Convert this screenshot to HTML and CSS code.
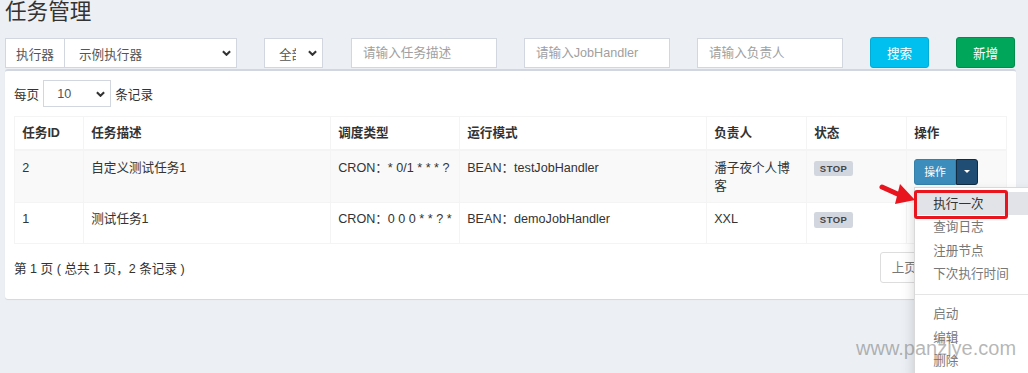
FILE: index.html
```html
<!DOCTYPE html>
<html lang="zh-CN">
<head>
<meta charset="utf-8">
<title>任务管理</title>
<link rel="stylesheet" href="styles.css">
</head>
<body>
<div class="page">
  <h1 class="title">任务管理</h1>

  <div class="filters">
    <div class="input-group">
      <span class="addon">执行器</span>
      <div class="select sel-main"><span>示例执行器</span><svg class="chev" viewBox="0 0 10 6" width="9" height="6"><polyline points="1,1 5,5 9,1"/></svg></div>
    </div>
    <div class="select sel-status"><span class="clip">全部</span><svg class="chev" viewBox="0 0 10 6" width="9" height="6"><polyline points="1,1 5,5 9,1"/></svg></div>
    <input class="inp inp-first" type="text" placeholder="请输入任务描述">
    <input class="inp" type="text" placeholder="请输入JobHandler">
    <input class="inp" type="text" placeholder="请输入负责人">
    <button class="btn btn-info">搜索</button>
    <button class="btn btn-success">新增</button>
  </div>

  <div class="box">
    <div class="length">
      <span>每页</span>
      <div class="select sel-len"><span>10</span><svg class="chev" viewBox="0 0 10 6" width="9" height="6"><polyline points="1,1 5,5 9,1"/></svg></div>
      <span>条记录</span>
    </div>

    <table class="grid">
      <colgroup>
        <col class="c-id"><col class="c-desc"><col class="c-type"><col class="c-mode"><col class="c-owner"><col class="c-state"><col class="c-op">
      </colgroup>
      <thead>
        <tr><th>任务ID</th><th>任务描述</th><th>调度类型</th><th>运行模式</th><th>负责人</th><th>状态</th><th>操作</th></tr>
      </thead>
      <tbody>
        <tr>
          <td>2</td>
          <td>自定义测试任务1</td>
          <td>CRON：* 0/1 * * * ?</td>
          <td>BEAN：testJobHandler</td>
          <td>潘子夜个人博客</td>
          <td><span class="label">STOP</span></td>
          <td>
            <div class="btn-group">
              <span class="btn-op">操作</span><span class="btn-toggle"><span class="caret"></span></span>
              <ul class="menu">
                <li class="active"><span class="mark"></span>执行一次</li>
                <li>查询日志</li>
                <li>注册节点</li>
                <li>下次执行时间</li>
                <li class="divider"></li>
                <li>启动</li>
                <li>编辑</li>
                <li>删除</li>
              </ul>
            </div>
          </td>
        </tr>
        <tr>
          <td>1</td>
          <td>测试任务1</td>
          <td>CRON：0 0 0 * * ? *</td>
          <td>BEAN：demoJobHandler</td>
          <td>XXL</td>
          <td><span class="label">STOP</span></td>
          <td>
            <div class="btn-group">
              <span class="btn-op">操作</span><span class="btn-toggle plain"><span class="caret"></span></span>
            </div>
          </td>
        </tr>
      </tbody>
    </table>

    <div class="footer">
      <span>第 1 页 ( 总共 1 页，2 条记录 )</span>
      <div class="pagination">
        <span class="pg first">上页</span><span class="pg cur">1</span><span class="pg last">下页</span>
      </div>
    </div>
  </div>

  <svg class="arrow" width="44" height="34" viewBox="0 0 44 34">
    <line x1="4" y1="6" x2="24" y2="15" stroke="#e8141e" stroke-width="5" stroke-linecap="round"/>
    <polygon points="22,3 37,19 17,23" fill="#e8141e"/>
  </svg>

  <div class="watermark">www.panziye.com</div>
</div>
</body>
</html>
```

FILE: styles.css
```css
* { box-sizing: border-box; }

body {
  margin: 0;
  background: #ecf0f5;
  font-family: "Liberation Sans", "Noto Sans CJK SC", sans-serif;
  font-size: 12.6px;
  color: #333;
  overflow: hidden;
}

.page {
  position: relative;
  width: 1028px;
  height: 373px;
  padding-left: 5px;
}

.title {
  margin: 0;
  font-size: 21.6px;
  font-weight: normal;
  line-height: 24px;
  color: #333;
}

.filters {
  display: flex;
  gap: 27px;
  margin-top: 14px;
  height: 30px;
}

.input-group {
  display: flex;
  width: 232px;
}

.addon {
  width: 60px;
  border: 1px solid #d2d6de;
  background: #fff;
  display: flex;
  align-items: center;
  justify-content: center;
  color: #555;
}

.select {
  display: flex;
  align-items: center;
  justify-content: space-between;
  border: 1px solid #d2d6de;
  background: #fff;
  padding: 0 5px 0 14px;
  color: #555;
}

.sel-main { flex: 1; border-left: none; }
.sel-status { width: 59px; }
.clip { display: block; width: 17px; overflow: hidden; white-space: nowrap; }

.chev polyline {
  fill: none;
  stroke: #333;
  stroke-width: 2.3;
}

.inp {
  width: 146px;
  height: 30px;
  border: 1px solid #d2d6de;
  background: #fff;
  padding: 0 11px;
  font: inherit;
  color: #555;
  outline: none;
}
.inp::placeholder { color: #a0a0a0; }
.inp-first { margin-left: 1px; }

.btn {
  width: 59px;
  height: 31px;
  margin-top: -1px;
  border: 1px solid;
  border-radius: 3px;
  color: #fff;
  font: inherit;
  padding: 0;
}
.btn-info { background: #00c0ef; border-color: #00acd6; }
.btn-success { background: #00a65a; border-color: #008d4c; }

.box {
  margin-top: 1px;
  width: 1011px;
  height: 230px;
  background: #fff;
  border-top: 2px solid #d2d6de;
  border-radius: 3px;
  box-shadow: 0 1px 1px rgba(0, 0, 0, 0.1);
  padding: 9px 10px 0 9px;
}

.length {
  display: flex;
  align-items: center;
  gap: 4px;
  height: 27px;
}
.sel-len {
  width: 68px;
  height: 27px;
  padding-left: 13px;
}

.grid {
  margin-top: 9px;
  width: 992px;
  border-collapse: collapse;
  table-layout: fixed;
}
.c-id { width: 69px; }
.c-desc { width: 247px; }
.c-type { width: 129px; }
.c-mode { width: 247px; }
.c-owner { width: 100px; }
.c-state { width: 100px; }
.c-op { width: 100px; }

.grid th, .grid td {
  border: 1px solid #f4f4f4;
  padding: 7.2px;
  line-height: 18px;
  text-align: left;
  vertical-align: top;
}
.grid th { border-bottom-width: 2px; font-weight: bold; }
.grid tbody tr:nth-child(odd) { background: #f9f9f9; }

.label {
  background: #d2d6de;
  color: #444;
  font-size: 9.45px;
  font-weight: bold;
  line-height: 1;
  padding: 0.2em 0.6em 0.3em;
  border-radius: 0.25em;
  letter-spacing: 0.5px;
}

.btn-group {
  position: relative;
  display: inline-flex;
  vertical-align: top;
}
.btn-op {
  background: #3c8dbc;
  border: 1px solid #367fa9;
  color: #fff;
  font-size: 10.8px;
  line-height: 16px;
  padding: 4px 9px;
  border-radius: 3px 0 0 3px;
}
.btn-toggle {
  width: 22px;
  background: #204d74;
  border: 1px solid #122b40;
  border-radius: 0 3px 3px 0;
  display: flex;
  align-items: center;
  justify-content: center;
}
.btn-toggle.plain { background: #3c8dbc; border-color: #367fa9; }
.caret {
  width: 0;
  height: 0;
  border-top: 3.5px solid #fff;
  border-left: 3px solid transparent;
  border-right: 3px solid transparent;
}

.menu {
  position: absolute;
  top: 100%;
  left: 0;
  z-index: 10;
  width: 150px;
  margin: 2px 0 0;
  padding: 4.5px 0;
  list-style: none;
  background: #fff;
  border: 1px solid rgba(0, 0, 0, 0.15);
  box-shadow: 0 6px 12px rgba(0, 0, 0, 0.175);
}
.menu li {
  position: relative;
  padding: 2.7px 18px;
  line-height: 18px;
  color: #777;
  white-space: nowrap;
}
.menu li.active { background: #e1e3e9; color: #333; }
.menu li.divider {
  height: 1px;
  padding: 0;
  margin: 8.1px 0;
  background: #e5e5e5;
}
.mark {
  position: absolute;
  left: -1px;
  top: -2.5px;
  width: 94px;
  height: 29px;
  border: 3px solid #e8141e;
  border-radius: 3px;
}

.footer {
  display: flex;
  justify-content: space-between;
  align-items: center;
  margin-top: 8px;
}
.pagination { display: flex; }
.pg {
  border: 1px solid #ddd;
  margin-left: -1px;
  padding: 5.4px 10.8px;
  line-height: 18px;
  color: #777;
  background: #fff;
}
.pg.first { border-radius: 3px 0 0 3px; }
.pg.last { border-radius: 0 3px 3px 0; }
.pg.cur { background: #337ab7; border-color: #337ab7; color: #fff; }

.arrow {
  position: absolute;
  left: 878px;
  top: 181px;
  z-index: 11;
}

.watermark {
  position: absolute;
  left: 856px;
  top: 336px;
  z-index: 12;
  font-family: "Liberation Sans", sans-serif;
  font-size: 20px;
  line-height: 24px;
  color: rgba(110, 110, 110, 0.5);
}
```
